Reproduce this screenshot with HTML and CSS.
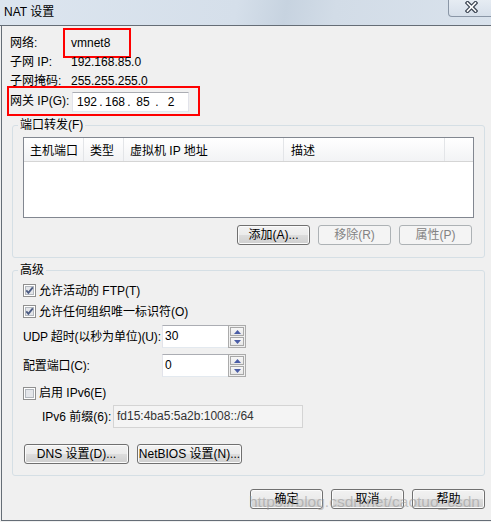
FILE: index.html
```html
<!DOCTYPE html>
<html lang="zh-CN">
    <head>
        <meta charset="utf-8" />
        <title>NAT 设置</title>

        <link rel="stylesheet" href="styles.css">
    </head>

    <body>
        <header class="barre-titre">
            <span class="titre">NAT 设置</span>
            <button class="fermer" type="button" aria-label="关闭">
                <svg width="13" height="12" viewBox="0 0 13 12">
                    <path d="M2.5 2 L10.5 10 M10.5 2 L2.5 10" stroke="#3d4654" stroke-width="4" stroke-linecap="square" fill="none"/>
                    <path d="M2.5 2 L10.5 10 M10.5 2 L2.5 10" stroke="#ffffff" stroke-width="1.6" stroke-linecap="square" fill="none"/>
                </svg>
            </button>
        </header>

        <main class="corps">
            <div class="infos">
                <span class="libelle">网络:</span>
                <span class="valeur encadre">vmnet8</span>
                <span class="libelle">子网 IP:</span>
                <span class="valeur">192.168.85.0</span>
                <span class="libelle">子网掩码:</span>
                <span class="valeur">255.255.255.0</span>
            </div>

            <div class="passerelle">
                <span class="libelle-passerelle">网关 IP(G):</span>
                <div class="champ-ip">
                    <span class="octet">192</span><span class="point">.</span>
                    <span class="octet">168</span><span class="point">.</span>
                    <span class="octet">85</span><span class="point">.</span>
                    <span class="octet">2</span>
                </div>
            </div>

            <fieldset class="groupe groupe-ports">
                <legend>端口转发(F)</legend>
                <div class="liste">
                    <div class="entete">
                        <span class="col col-port">主机端口</span>
                        <span class="col col-type">类型</span>
                        <span class="col col-ip">虚拟机 IP 地址</span>
                        <span class="col col-desc">描述</span>
                        <span class="col col-vide"></span>
                    </div>
                </div>
                <div class="boutons-liste">
                    <button class="bouton" type="button">添加(A)...</button>
                    <button class="bouton" type="button" disabled>移除(R)</button>
                    <button class="bouton" type="button" disabled>属性(P)</button>
                </div>
            </fieldset>

            <fieldset class="groupe groupe-avance">
                <legend>高级</legend>

                <label class="case-ligne">
                    <svg class="case" width="13" height="13" viewBox="0 0 13 13">
                        <rect x="0.5" y="0.5" width="12" height="12" fill="#ffffff" stroke="#8f8f8f"/>
                        <rect x="2.5" y="2.5" width="8" height="8" fill="#e4e6ea" stroke="#b3b8be"/>
                        <path d="M3.3 6.4 L5.4 8.8 L9.8 3.4" stroke="#4b5b82" stroke-width="1.8" fill="none"/>
                    </svg>
                    允许活动的 FTP(T)
                </label>
                <label class="case-ligne">
                    <svg class="case" width="13" height="13" viewBox="0 0 13 13">
                        <rect x="0.5" y="0.5" width="12" height="12" fill="#ffffff" stroke="#8f8f8f"/>
                        <rect x="2.5" y="2.5" width="8" height="8" fill="#e4e6ea" stroke="#b3b8be"/>
                        <path d="M3.3 6.4 L5.4 8.8 L9.8 3.4" stroke="#4b5b82" stroke-width="1.8" fill="none"/>
                    </svg>
                    允许任何组织唯一标识符(O)
                </label>

                <div class="ligne-spin">
                    <span class="libelle-spin">UDP 超时(以秒为单位)(U):</span>
                    <span class="champ">30</span>
                    <span class="spin">
                        <span class="fleche"><svg width="7" height="4" viewBox="0 0 7 4"><path d="M0 4 L3.5 0 L7 4Z" fill="#4a5da6"/></svg></span>
                        <span class="fleche"><svg width="7" height="4" viewBox="0 0 7 4"><path d="M0 0 L7 0 L3.5 4Z" fill="#4a5da6"/></svg></span>
                    </span>
                </div>
                <div class="ligne-spin ligne-port">
                    <span class="libelle-spin">配置端口(C):</span>
                    <span class="champ">0</span>
                    <span class="spin">
                        <span class="fleche"><svg width="7" height="4" viewBox="0 0 7 4"><path d="M0 4 L3.5 0 L7 4Z" fill="#4a5da6"/></svg></span>
                        <span class="fleche"><svg width="7" height="4" viewBox="0 0 7 4"><path d="M0 0 L7 0 L3.5 4Z" fill="#4a5da6"/></svg></span>
                    </span>
                </div>

                <label class="case-ligne ligne-ipv6">
                    <svg class="case" width="13" height="13" viewBox="0 0 13 13">
                        <rect x="0.5" y="0.5" width="12" height="12" fill="#ffffff" stroke="#8f8f8f"/>
                        <rect x="2.5" y="2.5" width="8" height="8" fill="#e4e6ea" stroke="#b3b8be"/>
                    </svg>
                    启用 IPv6(E)
                </label>

                <div class="ligne-prefixe">
                    <span class="libelle-prefixe">IPv6 前缀(6):</span>
                    <span class="champ-inactif">fd15:4ba5:5a2b:1008::/64</span>
                </div>

                <div class="boutons-reseau">
                    <button class="bouton bouton-large" type="button">DNS 设置(D)...</button>
                    <button class="bouton bouton-large" type="button">NetBIOS 设置(N)...</button>
                </div>
            </fieldset>

            <div class="boutons-bas">
                <button class="bouton" type="button">确定</button>
                <button class="bouton" type="button">取消</button>
                <button class="bouton" type="button">帮助</button>
            </div>

            <span class="filigrane">https://blog.csdn.net/caotuo_csdn</span>
        </main>
    </body>
</html>
```

FILE: styles.css
```css
/* Normalisation
=============================================== */
* {
    margin: 0;
    padding: 0;
    box-sizing: border-box;
}

html,
body {
    width: 491px;
    height: 522px;
    overflow: hidden;
}

body {
    background-color: #f0f0f0;
    color: #000;
    font-family: "Liberation Sans", "Noto Sans CJK SC", sans-serif;
    font-size: 12px;
    line-height: 14px;
}

/* Barre de titre
=============================================== */
.barre-titre {
    height: 26px;
    display: flex;
    align-items: flex-start;
    justify-content: space-between;
    background: linear-gradient(100deg, #dce5ef 0%, #d5dfea 48%, #c7d3e0 58%, #d2dce7 68%, #d9e2ec 100%);
    border-bottom: 1px solid #656d76;
}

.titre {
    padding-left: 4px;
    line-height: 25px;
}

.fermer {
    width: 49px;
    height: 17px;
    margin-right: -6px;
    display: flex;
    align-items: center;
    justify-content: center;
    padding-bottom: 3px;
    padding-right: 2px;
    background: linear-gradient(#e6ecf3, #d6dfea);
    border: 1px solid #8a96a6;
    border-top: none;
    border-bottom-left-radius: 4px;
}

/* Corps de la fenêtre
=============================================== */
.corps {
    position: relative;
    height: 495px;
    margin-left: 1px;
    padding: 0 6px 0 8px;
    border-left: 1px solid #656d76;
    border-bottom: 1px solid #656d76;
    display: flex;
    flex-direction: column;
    align-items: stretch;
}

.infos {
    padding-top: 8px;
    display: grid;
    grid-template-columns: 61px auto;
    grid-template-rows: 19px 19px 14px;
    line-height: 19px;
}

.valeur {
    position: relative;
}

/* Cadre rouge d'annotation autour de vmnet8 */
.encadre::after {
    content: "";
    position: absolute;
    left: -8px;
    top: -6px;
    width: 64px;
    height: 26px;
    border: 2px solid #f00;
}

.passerelle {
    align-self: flex-start;
    width: 193px;
    height: 30px;
    margin-left: -3px;
    padding-left: 1px;
    border: 2px solid #f00;
    display: flex;
    align-items: center;
}

.libelle-passerelle {
    width: 62px;
}

.champ-ip {
    width: 117px;
    height: 20px;
    margin-top: 2px;
    padding-left: 2px;
    display: flex;
    align-items: center;
    background: #fff;
    border: 1px solid #e2e3ea;
    border-top-color: #abadb3;
    border-bottom-color: #e3e9ef;
}

.octet {
    width: 24px;
    text-align: center;
}

.point {
    width: 4px;
    text-align: center;
}

/* Groupes
=============================================== */
.groupe {
    min-width: 0;
    margin-left: 2px;
    padding: 0 10px;
    border: 1px solid #d5dfe5;
    border-radius: 3px;
}

.groupe legend {
    margin-left: -5px;
    padding: 0 2px;
    line-height: 14px;
}

.groupe-ports {
    margin-top: 2px;
    padding-top: 5px;
    padding-bottom: 12px;
}

.groupe-avance {
    margin-top: 5px;
    padding-top: 3px;
    padding-bottom: 11px;
}

/* Liste des ports */
.liste {
    height: 81px;
    background: #fff;
    border: 1px solid #828790;
}

.entete {
    height: 24px;
    display: flex;
    background: linear-gradient(#ffffff, #f2f3f5);
    border-bottom: 1px solid #d5d5d5;
}

.col {
    padding: 3px 0 0 6px;
    line-height: 20px;
    border-right: 1px solid #e3e5e8;
}

.col-port {
    width: 60px;
}

.col-type {
    width: 40px;
}

.col-ip {
    width: 160px;
}

.col-desc {
    width: 161px;
    padding-left: 7px;
}

.col-vide {
    flex: 1;
    border-right: none;
}

/* Boutons
=============================================== */
.bouton {
    width: 73px;
    height: 20px;
    font-family: inherit;
    font-size: 12px;
    line-height: 16px;
    color: #000;
    border: 1px solid #707070;
    border-radius: 3px;
    background: linear-gradient(#f2f2f2 0%, #ebebeb 50%, #dddddd 50%, #cfcfcf 100%);
    box-shadow: inset 0 0 0 1px #fbfbfb;
}

.bouton:disabled {
    color: #838383;
    border-color: #adb2b5;
    background: #f4f4f4;
    box-shadow: none;
}

.boutons-liste {
    margin-top: 7px;
    margin-right: 2px;
    display: flex;
    justify-content: flex-end;
    gap: 8px;
}

.boutons-reseau {
    margin-top: 16px;
    margin-left: 1px;
    display: flex;
    gap: 8px;
}

.bouton-large {
    width: 105px;
}

.boutons-bas {
    margin-top: 13px;
    display: flex;
    justify-content: flex-end;
    gap: 8px;
}

/* Cases à cocher et champs
=============================================== */
.case-ligne {
    height: 21px;
    display: flex;
    align-items: center;
    gap: 3px;
}

.case {
    flex: none;
}

.ligne-spin {
    margin-top: 3px;
    height: 23px;
    display: flex;
    align-items: center;
}

.ligne-port {
    margin-top: 6px;
}

.libelle-spin {
    flex: none;
    width: 139px;
    white-space: nowrap;
    letter-spacing: -0.15px;
}

.champ {
    width: 66px;
    height: 23px;
    padding-left: 2px;
    line-height: 20px;
    background: #fff;
    border: 1px solid #e2e3ea;
    border-right: none;
    border-top-color: #abadb3;
    border-bottom-color: #e3e9ef;
}

.spin {
    width: 18px;
    height: 23px;
    padding: 1px;
    display: flex;
    flex-direction: column;
    gap: 1px;
    border: 1px solid #ababab;
    background: #f0f0f0;
}

.fleche {
    flex: 1;
    display: flex;
    align-items: center;
    justify-content: center;
    border: 1px solid #a8a8a8;
    background: linear-gradient(#f7f7f7, #e8e8e8);
}

.ligne-ipv6 {
    margin-top: 6px;
    height: 20px;
}

.ligne-prefixe {
    margin-top: 2px;
    height: 23px;
    display: flex;
    align-items: center;
    padding-left: 19px;
}

.libelle-prefixe {
    width: 71px;
}

.champ-inactif {
    width: 190px;
    height: 23px;
    padding: 3px 0 0 3px;
    color: #333;
    background: #f4f4f4;
    border: 1px solid #d4d4d4;
}

/* Filigrane de la capture */
.filigrane {
    position: absolute;
    left: 247px;
    top: 467px;
    font-size: 15.5px;
    line-height: 18px;
    color: rgba(150, 150, 150, 0.55);
    white-space: nowrap;
    pointer-events: none;
}
```
